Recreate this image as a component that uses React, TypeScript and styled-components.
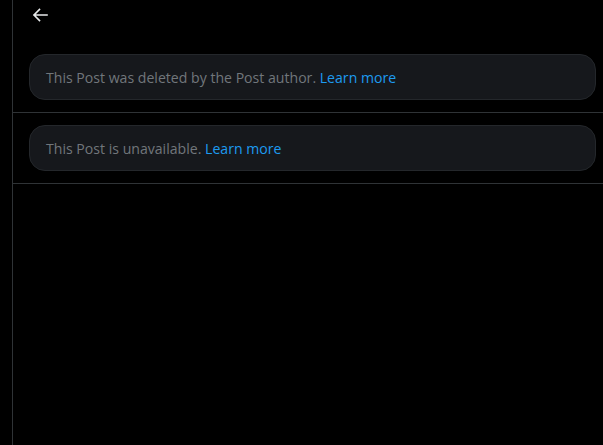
import React from "react";
import styled, { createGlobalStyle } from "styled-components";

const GlobalStyle = createGlobalStyle`
  html, body {
    margin: 0;
    padding: 0;
    background: #000000;
    overflow: hidden;
  }
  body {
    font-family: "Segoe UI", "Open Sans", "Noto Sans", sans-serif;
    -webkit-font-smoothing: antialiased;
  }
`;

const Page = styled.div`
  width: 603px;
  height: 445px;
  background: #000;
  display: flex;
  overflow: hidden;
`;

const Column = styled.main`
  margin-left: 12px;
  width: 599px;
  flex-shrink: 0;
  border-left: 1px solid #2f3336;
  border-right: 1px solid #2f3336;
  min-height: 100%;
  display: flex;
  flex-direction: column;
`;

const Header = styled.header`
  height: 42px;
  display: flex;
  align-items: flex-start;
  padding-left: 19px;
  padding-top: 7px;
  box-sizing: border-box;
`;

const BackButton = styled.button`
  width: 16px;
  height: 16px;
  padding: 0;
  border: none;
  background: transparent;
  color: #e7e9ea;
  display: flex;
  align-items: center;
  justify-content: center;
  cursor: pointer;
`;

const Cell = styled.article`
  padding: 12px 16px;
  border-bottom: 1px solid #2f3336;
`;

const Notice = styled.div`
  background: #16181c;
  border: 1px solid #24272b;
  border-radius: 16px;
  padding: 13px 16px 11px;
  font-size: 14.1px;
  line-height: 20px;
  color: #71767b;
`;

const Link = styled.a`
  color: #1d9bf0;
  text-decoration: none;
`;

const ArrowIcon = () => (
  <svg width="16" height="16" viewBox="0 0 16 16" fill="none">
    <path
      d="M15 8H2M7.5 2.5L2 8l5.5 5.5"
      stroke="currentColor"
      strokeWidth="1.6"
      strokeLinecap="square"
    />
  </svg>
);

const notices = [
  "This Post was deleted by the Post author.",
  "This Post is unavailable.",
];

export default function App() {
  return (
    <>
      <GlobalStyle />
      <Page>
        <Column>
          <Header>
            <BackButton aria-label="Back">
              <ArrowIcon />
            </BackButton>
          </Header>
          {notices.map((text) => (
            <Cell key={text}>
              <Notice>
                {text} <Link href="#">Learn more</Link>
              </Notice>
            </Cell>
          ))}
        </Column>
      </Page>
    </>
  );
}
